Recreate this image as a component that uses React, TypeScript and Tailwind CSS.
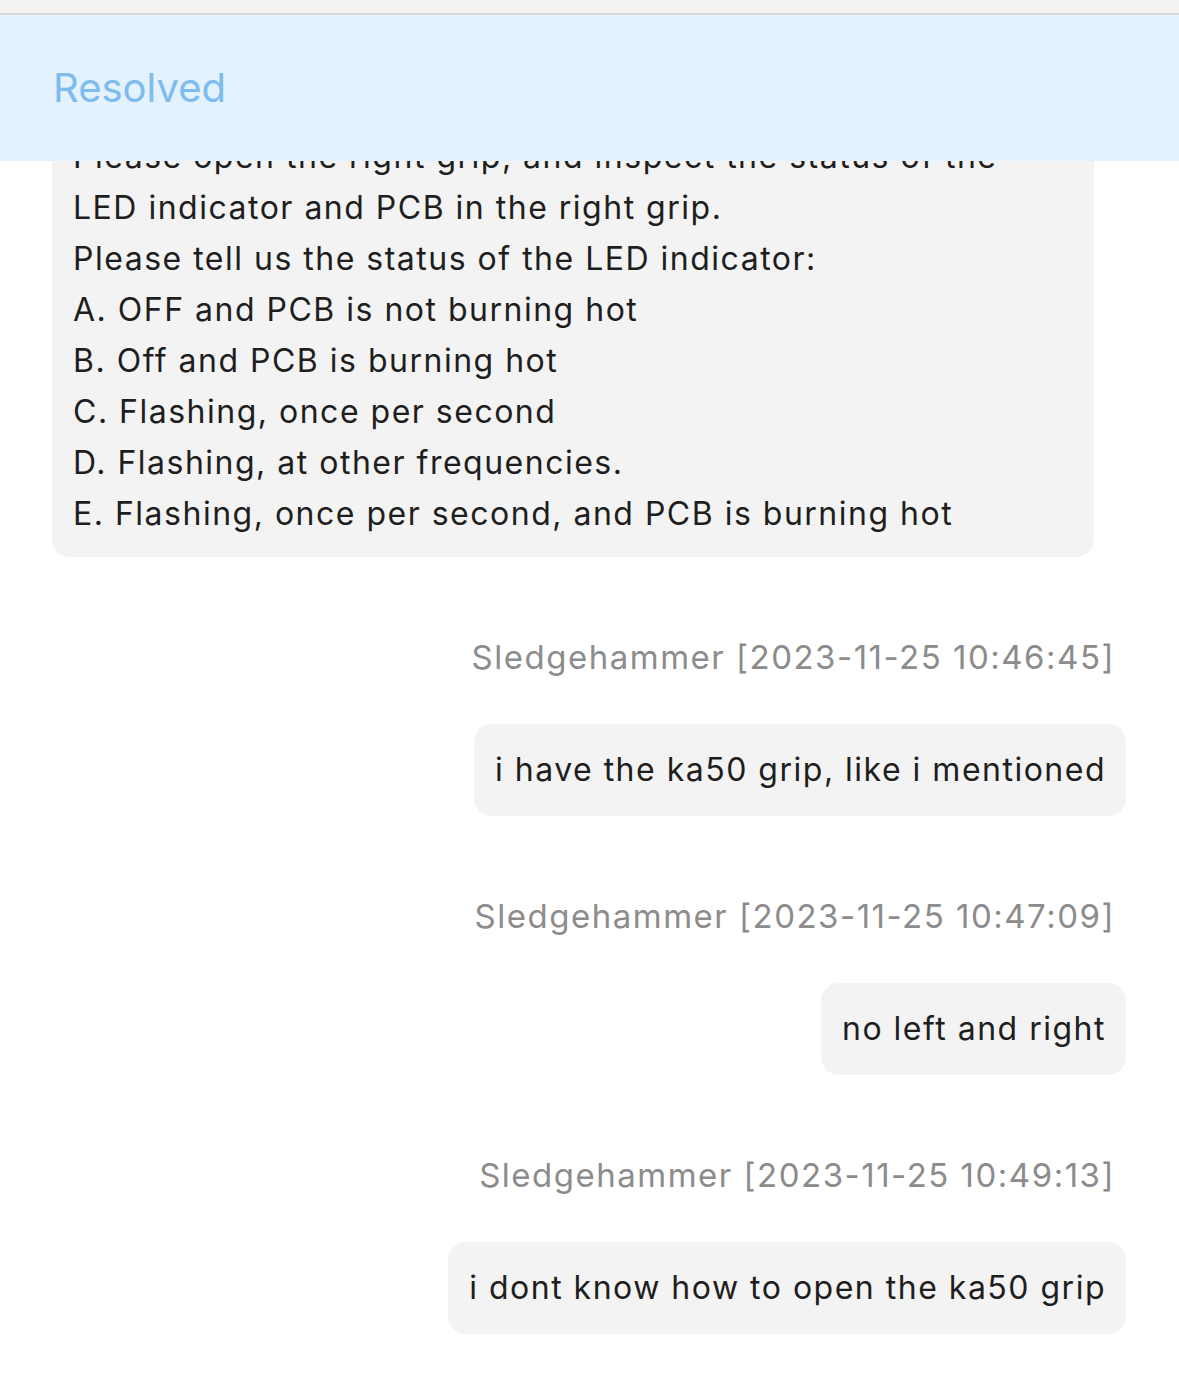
import React from "react";

const font = { fontFamily: "Inter, 'Noto Sans', sans-serif" };

function Stamp({ text }: { text: string }) {
  return (
    <div className="mt-[80px] flex justify-end pr-[64px] text-[33px] leading-[40px] tracking-[1.5px] text-[#8c8c8c]">
      {text}
    </div>
  );
}

function Mine({ text }: { text: string }) {
  return (
    <div className="mt-[47px] flex justify-end pr-[53px]">
      <div className="rounded-[18px] bg-[#f3f3f3] pl-[21px] pr-[20px] py-[20px] text-[32px] leading-[52px] tracking-[1.5px] text-[#1e1e1e]">
        {text}
      </div>
    </div>
  );
}

export default function App() {
  const lines = [
    "Please open the right grip, and inspect the status of the",
    "LED indicator and PCB in the right grip.",
    "Please tell us the status of the LED indicator:",
    "A. OFF and PCB is not burning hot",
    "B. Off and PCB is burning hot",
    "C. Flashing, once per second",
    "D. Flashing, at other frequencies.",
    "E. Flashing, once per second, and PCB is burning hot",
  ];
  return (
    <div className="relative h-[1392px] w-full overflow-hidden bg-white" style={font}>
      <div className="pt-[113px]">
        <div className="ml-[52px] w-[1042px] rounded-[18px] bg-[#f3f3f3] px-[21px] py-[18px] text-[32px] leading-[51px] tracking-[1.5px] text-[#1e1e1e]">
          {lines.map((l) => (
            <div key={l}>{l}</div>
          ))}
        </div>
        <Stamp text="Sledgehammer [2023-11-25 10:46:45]" />
        <Mine text="i have the ka50 grip, like i mentioned" />
        <Stamp text="Sledgehammer [2023-11-25 10:47:09]" />
        <Mine text="no left and right" />
        <Stamp text="Sledgehammer [2023-11-25 10:49:13]" />
        <Mine text="i dont know how to open the ka50 grip" />
      </div>
      <div className="absolute inset-x-0 top-0">
        <div className="h-[15px] border-b-2 border-[#d9d9d9] bg-[#f3f3f3]" />
        <div className="flex h-[146px] items-center bg-[#e3f2fc] pl-[53px] text-[40px] text-[#7dbcef]">
          Resolved
        </div>
      </div>
    </div>
  );
}
